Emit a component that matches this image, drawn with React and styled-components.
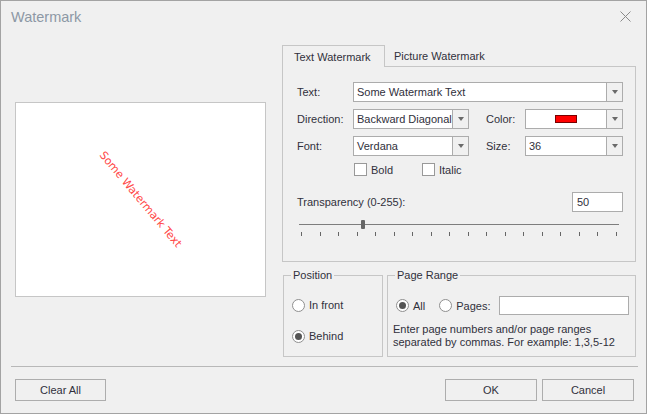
import React from 'react'
import styled, { createGlobalStyle, css } from 'styled-components'

const GlobalStyle = createGlobalStyle`
    html, body {
        margin: 0;
        padding: 0;
        background: #f0f0f0;
    }
    body {
        font-family: "Liberation Sans", Arial, sans-serif;
        font-size: 11px;
        color: #30303c;
    }
`

const Window = styled.div`
    width: 647px;
    height: 414px;
    box-sizing: border-box;
    border: 1px solid #a3a3a3;
    background: #f0f0f0;
    display: flex;
    flex-direction: column;
`

const TitleBar = styled.div`
    height: 31px;
    display: flex;
    align-items: center;
    justify-content: space-between;
    padding: 0 15px 0 10px;
`

const Title = styled.div`
    font-size: 14.5px;
    color: #8d98a5;
`

const CloseButton = styled.div`
    width: 11px;
    height: 11px;
    display: flex;
`

const Body = styled.div`
    display: flex;
    height: 312px;
    padding: 13px 10px 0 14px;
`

const Preview = styled.div`
    margin-top: 57px;
    width: 252px;
    height: 195px;
    box-sizing: border-box;
    border: 1px solid #c6c6c6;
    background: #fff;
    display: flex;
    align-items: center;
    justify-content: center;
    overflow: hidden;
`

const PreviewText = styled.span`
    font-family: "DejaVu Sans", Verdana, sans-serif;
    font-size: 11px;
    color: #ff4747;
    white-space: nowrap;
    transform: rotate(50deg);
`

const RightColumn = styled.div`
    margin-left: 16px;
    width: 354px;
    display: flex;
    flex-direction: column;
`

const TabStrip = styled.div`
    display: flex;
    height: 21px;
`

const Tab = styled.div`
    box-sizing: border-box;
    display: flex;
    align-items: center;
    padding-left: 9px;
    ${props => props.active && css`
        width: 103px;
        height: 22px;
        padding-left: 11px;
        border: 1px solid #c6c6c6;
        border-bottom: none;
        background: #f0f0f0;
        position: relative;
        z-index: 1;
    `}
`

const TabPanel = styled.div`
    box-sizing: border-box;
    height: 196px;
    border: 1px solid #c6c6c6;
    padding: 15px 12px 0 14px;
`

const FieldRow = styled.div`
    display: flex;
    align-items: center;
    height: 20px;
    margin-bottom: 7px;
`

const Label = styled.div`
    width: ${props => props.w || 56}px;
    margin-left: ${props => props.gap || 0}px;
    flex-shrink: 0;
`

const Combo = styled.div`
    box-sizing: border-box;
    width: ${props => props.w}px;
    height: 20px;
    border: 1px solid #acacac;
    background: #fff;
    display: flex;
`

const ComboValue = styled.div`
    flex: 1;
    display: flex;
    align-items: center;
    justify-content: ${props => props.center ? 'center' : 'flex-start'};
    padding-left: ${props => props.center ? 0 : 3}px;
    white-space: nowrap;
    overflow: hidden;
`

const ComboButton = styled.div`
    width: 15px;
    border-left: 1px solid #acacac;
    background: #f0f0f0;
    display: flex;
    align-items: center;
    justify-content: center;
    &::after {
        content: '';
        border-left: 3.5px solid transparent;
        border-right: 3.5px solid transparent;
        border-top: 4px solid #6a6a6a;
    }
`

const Swatch = styled.div`
    width: 22px;
    height: 8px;
    box-sizing: border-box;
    border: 1px solid #7a0000;
    background: #ff0000;
`

const CheckRow = styled.div`
    display: flex;
    align-items: center;
    height: 13px;
    margin-left: 57px;
`

const CheckItem = styled.label`
    display: flex;
    align-items: center;
    gap: 4px;
    width: ${props => props.w ? props.w + 'px' : 'auto'};
`

const Box = styled.span`
    width: 13px;
    height: 13px;
    box-sizing: border-box;
    border: 1px solid #999;
    background: #fff;
`

const TransparencyRow = styled.div`
    display: flex;
    align-items: center;
    justify-content: space-between;
    margin-top: 16px;
`

const TextInput = styled.div`
    box-sizing: border-box;
    width: ${props => props.w}px;
    height: ${props => props.h || 20}px;
    border: 1px solid #acacac;
    background: #fff;
    display: flex;
    align-items: center;
    padding-left: 4px;
`

const Slider = styled.div`
    position: relative;
    height: 9px;
    margin: 8px 4px 0 2px;
    &::before {
        content: '';
        position: absolute;
        left: 0;
        right: 0;
        top: 4px;
        height: 1px;
        background: #7d7d7d;
    }
`

const Thumb = styled.div`
    position: absolute;
    top: 0;
    width: 4px;
    height: 9px;
    border-radius: 1px;
    background: #666;
`

const Ticks = styled.div`
    display: flex;
    justify-content: space-between;
    height: 4px;
    margin: 3px 6px 0 4px;
`

const Tick = styled.span`
    width: 1px;
    background: #666;
`

const GroupRow = styled.div`
    display: flex;
    gap: 4px;
    margin-top: 7px;
`

const Group = styled.fieldset`
    box-sizing: border-box;
    margin: 0 0 0 ${props => props.ml || 0}px;
    width: ${props => props.w}px;
    height: 88px;
    border: 1px solid #c6c6c6;
    padding: ${props => props.pt}px 0 0 8px;
    min-width: 0;
`

const Legend = styled.legend`
    padding: 0 2px;
    margin-left: -1px;
    line-height: 13px;
`

const RadioItem = styled.label`
    display: flex;
    align-items: center;
    gap: 4px;
    height: 16px;
    margin-bottom: ${props => props.mb || 0}px;
    margin-right: ${props => props.mr || 0}px;
`

const Radio = styled.span`
    width: 13px;
    height: 13px;
    box-sizing: border-box;
    border-radius: 50%;
    border: 1px solid #8f8f8f;
    background: #fff;
    display: flex;
    align-items: center;
    justify-content: center;
    ${props => props.checked && css`
        &::after {
            content: '';
            width: 7px;
            height: 7px;
            border-radius: 50%;
            background: #555;
        }
    `}
`

const PagesRow = styled.div`
    display: flex;
    align-items: center;
    height: 19px;
`

const HelpText = styled.div`
    margin: 8px 0 0 -3px;
    line-height: 13px;
`

const Separator = styled.div`
    height: 1px;
    background: #b8b8b8;
    margin: 9px 8px 0 10px;
`

const ButtonBar = styled.div`
    display: flex;
    gap: 5px;
    padding: 12px 12px 12px 14px;
`

const Spacer = styled.div`
    flex: 1;
`

const Button = styled.button`
    box-sizing: border-box;
    width: ${props => props.w || 92}px;
    height: 22px;
    border: 1px solid #adadad;
    background: #f0f0f0;
    font-family: inherit;
    font-size: 11px;
    color: #30303c;
    padding: 0;
`

const tickCount = 18
const transparency = 50

function TransparencySlider({ value }) {
    const left = Math.round((value / 255) * 314) + 2 - 2
    return (
        <>
            <Slider>
                <Thumb style={{ left }} />
            </Slider>
            <Ticks>
                {Array.from({ length: tickCount }).map((_, i) => <Tick key={i} />)}
            </Ticks>
        </>
    )
}

export default function App() {
    return (
        <Window>
            <GlobalStyle />
            <TitleBar>
                <Title>Watermark</Title>
                <CloseButton>
                    <svg width="11" height="11" viewBox="0 0 11 11">
                        <path d="M0.5 0.5 L10.5 10.5 M10.5 0.5 L0.5 10.5" stroke="#8a8a8a" strokeWidth="1" fill="none" />
                    </svg>
                </CloseButton>
            </TitleBar>

            <Body>
                <Preview>
                    <PreviewText>Some Watermark Text</PreviewText>
                </Preview>

                <RightColumn>
                    <TabStrip>
                        <Tab active>Text Watermark</Tab>
                        <Tab>Picture Watermark</Tab>
                    </TabStrip>
                    <TabPanel>
                        <FieldRow>
                            <Label>Text:</Label>
                            <Combo w={270}>
                                <ComboValue>Some Watermark Text</ComboValue>
                                <ComboButton />
                            </Combo>
                        </FieldRow>
                        <FieldRow>
                            <Label>Direction:</Label>
                            <Combo w={116}>
                                <ComboValue>Backward Diagonal</ComboValue>
                                <ComboButton />
                            </Combo>
                            <Label w={39} gap={17}>Color:</Label>
                            <Combo w={98}>
                                <ComboValue center><Swatch /></ComboValue>
                                <ComboButton />
                            </Combo>
                        </FieldRow>
                        <FieldRow>
                            <Label>Font:</Label>
                            <Combo w={116}>
                                <ComboValue>Verdana</ComboValue>
                                <ComboButton />
                            </Combo>
                            <Label w={39} gap={17}>Size:</Label>
                            <Combo w={98}>
                                <ComboValue>36</ComboValue>
                                <ComboButton />
                            </Combo>
                        </FieldRow>
                        <CheckRow>
                            <CheckItem w={68}><Box />Bold</CheckItem>
                            <CheckItem><Box />Italic</CheckItem>
                        </CheckRow>
                        <TransparencyRow>
                            <div>Transparency (0-255):</div>
                            <TextInput w={51}>{transparency}</TextInput>
                        </TransparencyRow>
                        <TransparencySlider value={transparency} />
                    </TabPanel>

                    <GroupRow>
                        <Group w={100} ml={1} pt={15}>
                            <Legend>Position</Legend>
                            <RadioItem mb={15}><Radio />In front</RadioItem>
                            <RadioItem><Radio checked />Behind</RadioItem>
                        </Group>
                        <Group w={249} pt={14}>
                            <Legend>Page Range</Legend>
                            <PagesRow>
                                <RadioItem mr={14}><Radio checked />All</RadioItem>
                                <RadioItem mr={9}><Radio />Pages:</RadioItem>
                                <TextInput w={130} h={19} />
                            </PagesRow>
                            <HelpText>
                                Enter page numbers and/or page ranges<br />
                                separated by commas. For example: 1,3,5-12
                            </HelpText>
                        </Group>
                    </GroupRow>
                </RightColumn>
            </Body>

            <Separator />
            <ButtonBar>
                <Button w={91}>Clear All</Button>
                <Spacer />
                <Button>OK</Button>
                <Button>Cancel</Button>
            </ButtonBar>
        </Window>
    )
}
